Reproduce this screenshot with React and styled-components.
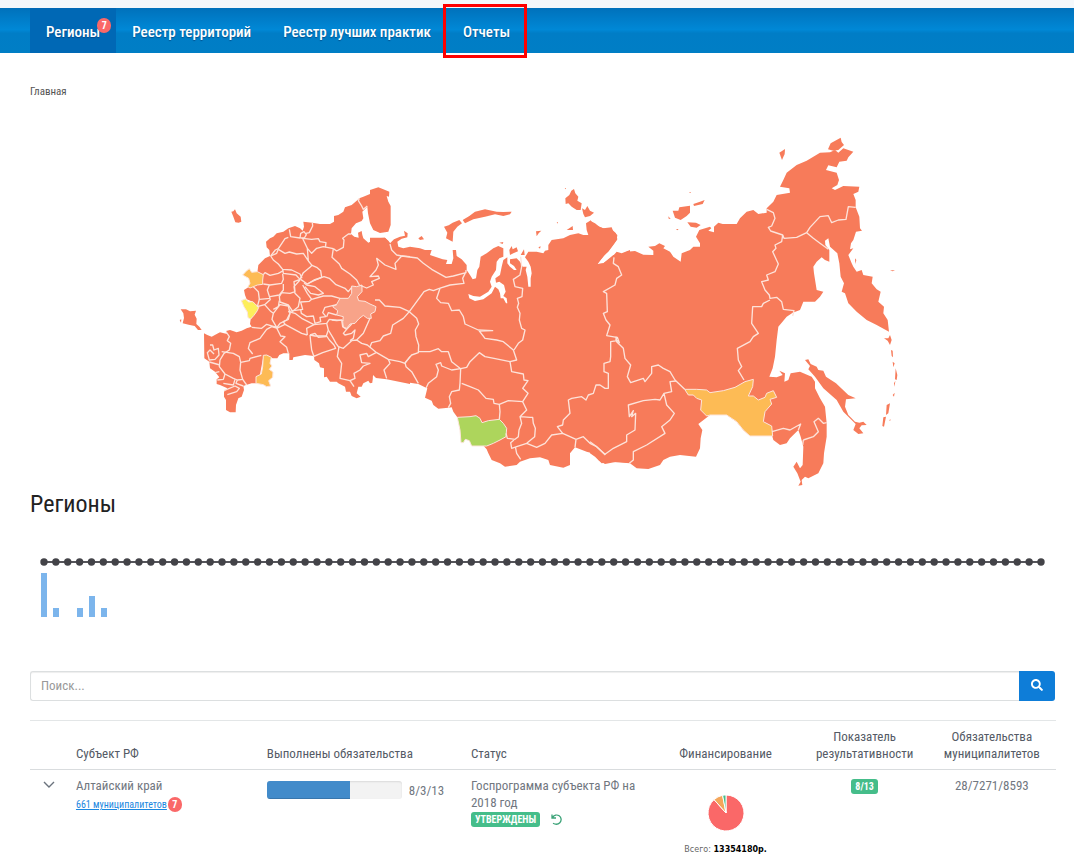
import styled, { createGlobalStyle } from "styled-components";
import { FaSearch } from "react-icons/fa";

const GlobalStyle = createGlobalStyle`
  * {
    box-sizing: border-box;
  }

  body {
    margin: 0;
    background: #fff;
    color: #71777f;
    font-family: "Roboto Condensed", "Liberation Sans Narrow", Roboto, sans-serif;
    font-size: 13px;
    line-height: 17px;
  }
`;

const Header = styled.header`
  padding-top: 8px;
  background: #f4f8fb;
`;

const Nav = styled.nav`
  display: flex;
  height: 45px;
  padding-left: 30px;
  background: linear-gradient(#0071bb 0%, #0088d6 48%, #007dc6 56%, #007ec5 100%);
`;

const NavLink = styled.a`
  position: relative;
  display: flex;
  align-items: center;
  padding: 4px 16px 0;
  color: #fff;
  font-size: 15px;
  font-weight: 500;
  text-decoration: none;
  text-shadow: 0 1px 1px rgba(0, 40, 90, 0.5);
  background: ${(p) => (p.$active ? "#0068b5" : "transparent")};

  &::after {
    content: "";
    display: ${(p) => (p.$marked ? "block" : "none")};
    position: absolute;
    inset: -4px -1px -5px -4px;
    border: 3px solid #f00;
  }
`;

const Badge = styled.span`
  display: inline-flex;
  align-items: center;
  justify-content: center;
  width: 14px;
  height: 15px;
  border-radius: 8px;
  background: #fa6868;
  color: #fff;
  font-size: 10px;
  font-weight: 700;
  line-height: 15px;
  text-shadow: none;
`;

const NavBadge = styled(Badge)`
  position: absolute;
  top: 10px;
  right: 5px;
`;

const Page = styled.main`
  padding: 30px 18px 0 30px;
`;

const Crumb = styled.a`
  display: block;
  color: #555;
  font-size: 11px;
  text-decoration: none;
`;

const MapSvg = styled.svg`
  display: block;
  width: 100%;
  margin-top: 30px;
`;

const Title = styled.h1`
  margin: 0;
  color: #222;
  font-size: 24px;
  font-weight: 400;
  line-height: 28px;
`;

const ChartSvg = styled.svg`
  display: block;
  width: 100%;
  margin-top: 32px;
`;

const Search = styled.form`
  display: flex;
  height: 30px;
  margin: 51px 1px 19px 0;
`;

const SearchInput = styled.input`
  flex: 1;
  min-width: 0;
  padding: 0 10px 2px;
  border: 1px solid #dcdfe0;
  border-right: 0;
  border-radius: 3px 0 0 3px;
  box-shadow: inset 0 1px 1px rgba(0, 0, 0, 0.07);
  font: inherit;

  &::placeholder {
    color: #999;
  }
`;

const SearchButton = styled.button`
  width: 36px;
  padding: 0;
  border: 0;
  border-radius: 0 3px 3px 0;
  background: #0e7dd8;
  color: #fff;
  font-size: 12px;
`;

const Table = styled.table`
  width: 100%;
  table-layout: fixed;
  border-collapse: collapse;
  border-top: 1px solid #e3e6e7;
`;

const Col = styled.col`
  width: ${(p) => p.$w}%;
`;

const Th = styled.th`
  padding: 7px 8px;
  border-bottom: 1px solid #d9dcde;
  color: #555b66;
  font-weight: 400;
  text-align: ${(p) => (p.$center ? "center" : "left")};
  vertical-align: bottom;
`;

const Td = styled.td`
  padding: 7px 8px;
  text-align: ${(p) => (p.$center ? "center" : "left")};
  vertical-align: top;
`;

const Toggle = styled.button`
  display: block;
  margin: 4px auto 0;
  padding: 0;
  border: 0;
  background: none;
  color: #6b737d;

  svg {
    display: block;
  }
`;

const SubRow = styled.div`
  display: flex;
  align-items: center;
  margin-top: 2px;
`;

const SubLink = styled.a`
  margin-right: 1px;
  color: #1b87e0;
  font-size: 10px;
  text-decoration: underline;
`;

const Progress = styled.div`
  display: flex;
  align-items: center;
  gap: 7px;
  margin-top: 4px;
`;

const Track = styled.div`
  width: 135px;
  height: 18px;
  overflow: hidden;
  border-radius: 3px;
  background: #f3f3f3;
  box-shadow: inset 0 1px 2px rgba(0, 0, 0, 0.1);
`;

const Fill = styled.div`
  height: 100%;
  background: #428bca;
  box-shadow: inset 0 -1px 0 rgba(0, 0, 0, 0.15);
`;

const Tag = styled.span`
  display: inline-block;
  padding: 0 4px;
  border-radius: 3px;
  background: #45bd8a;
  color: #fff;
  font-size: 10px;
  font-weight: 700;
  line-height: 15px;
`;

const StatusRow = styled.div`
  display: flex;
  align-items: center;
  gap: 11px;
  margin-top: 1px;
`;

const IconButton = styled.button`
  display: flex;
  padding: 0;
  border: 0;
  background: none;
  color: #3aa277;
`;

const Pie = styled.svg`
  display: block;
  margin: 18px auto 10px;
`;

const Total = styled.div`
  color: #666;
  font-family: "DejaVu Sans", sans-serif;
  font-size: 8px;

  b {
    color: #000;
  }
`;

const land = "#f77b5a";

// each part of the map has its own origin, units are thirds of a pixel
const west = {
  shapes: [
    "M568 85L580 80 600 72 600 60 625 52 640 58 658 65 657 80 650 78 655 95 662 108 662 165 655 185 630 189 610 180 600 160 594 130 592 110 585 117 577 125 580 145 575 153 558 160 545 175 543 192 553 200 566 203 564 188 575 183 577 195 580 205 595 218 620 205 645 203 655 212 662 222 720 250 720 642 650 628 618 624 604 610 608 625 607 638 600 640 595 632 580 640 575 650 565 650 560 670 572 680 560 685 545 678 540 665 528 665 525 650 505 640 500 635 480 635 470 620 462 622 462 595 450 592 447 580 433 570 432 558 405 555 370 562 368 570 358 570 358 550 340 550 328 555 322 565 308 565 290 555 280 560 265 640 245 640 228 645 220 648 222 660 215 680 205 685 198 705 197 727 180 727 168 720 168 690 162 680 162 665 172 655 150 645 140 642 140 628 148 622 135 605 120 595 118 575 103 565 102 490 112 495 125 500 140 492 150 487 162 490 172 492 168 483 180 480 200 487 215 482 230 475 245 470 240 462 242 448 265 412 248 395 230 388 225 375 222 360 235 352 250 350 280 315 262 308 265 285 285 265 300 258 298 240 290 232 288 215 300 205 310 200 320 190 340 185 355 175 375 168 390 175 398 182 402 170 400 155 427 158 450 162 480 162 492 155 492 138 505 135 520 125 525 112 545 105 560 92Z",
    "M184 125L190 124 195 118 200 130 212 140 214 155 206 158 196 157 190 140Z",
    "M32 418L48 418 60 424 78 422 74 434 80 446 79 462 88 470 95 480 84 480 74 468 56 464 38 460 42 444 40 430Z",
    "M29 450L34 448 33 458Z",
  ],
  tinted: [
    ["#fdbb55", "M218 315L230 302 238 296 245 307 262 305 280 314 278 330 278 343 262 345 250 350 240 354 234 350 240 340 236 325Z"],
    ["#fdee5c", "M214 392L226 387 236 396 248 395 256 402 266 412 262 422 252 436 242 447 234 443 232 426 222 410Z"],
    ["#fdbb55", "M280 556L290 555 304 562 300 580 306 588 298 598 309 606 308 622 296 632 302 648 290 650 280 644 258 640 258 620 274 612 278 590Z"],
    ["#f8a389", "M545 348L560 350 576 345 576 365 562 380 566 392 585 394 600 402 618 410 615 425 602 432 604 445 592 445 580 436 566 447 555 460 540 462 530 475 520 472 518 455 520 440 500 435 503 422 488 410 500 403 510 385 535 385 545 370Z"],
  ],
  borders: [
    "M568 85L565 92 575 108 580 118 592 108",
    "M427 158L428 168 418 188 408 190",
    "M358 178L362 200 390 204 392 190 402 185 409 194 403 204 392 204",
    "M355 202L345 206 325 236 316 240 302 258",
    "M325 238L345 250 358 246 380 252 400 250 415 273 412 235 400 210 398 205 425 208 445 206 450 215 468 218 466 232",
    "M302 258L310 270 325 282 338 298 365 300 390 312 396 325",
    "M302 258L320 250 325 238M415 273L426 286 420 292 400 308 390 328",
    "M412 235L425 250 440 235 460 230 490 236",
    "M490 236L500 243 520 232 522 210 518 205 535 192 543 192",
    "M426 286L440 292 452 302 455 322 432 332 412 342 392 328",
    "M338 298L340 310 378 315 390 328 372 335 375 365 360 370 335 368 328 380 330 396 355 405 368 424 385 410 390 385 375 370 372 350 390 330",
    "M280 314L285 308 300 316 325 310 340 302",
    "M280 342L300 345 335 340 340 328 338 312",
    "M250 350L265 365 268 388 300 385 292 360 298 345",
    "M340 342L340 360 328 375 300 380",
    "M268 388L262 410 284 404 302 388M284 404L302 424 310 430 306 448 320 472 290 463 275 475 245 472",
    "M310 418L325 410 328 392M310 430L330 404 355 408 360 430 350 450 330 460 320 474",
    "M412 342L432 330 462 320 478 325 498 344 525 355 535 365 545 352",
    "M402 338L410 345 435 350 460 370 445 375 422 370 405 350M398 345L412 370 425 388 460 378 485 378 510 385",
    "M425 388L418 394 392 396 398 418 370 422 355 425",
    "M392 418L394 430 410 440 430 438 435 460 452 455 450 442 468 440 458 428 465 412 500 404",
    "M355 425L375 430 395 445 432 464 470 460 478 448 520 452M470 440L475 428 500 435",
    "M470 460L475 480 468 500 445 502 435 490 420 495M412 495L395 490 345 463 320 475M412 495L410 475 432 464",
    "M490 236L486 262 508 282 515 295 540 312 560 330 568 345 590 354 610 345 605 335 628 325 625 318 600 320 618 300 625 285 620 265 645 285 678 298 675 280 695 258 720 260",
    "M660 222L665 240 680 255 695 258",
    "M345 463L340 455 355 448 360 430",
    "M320 474L332 498 345 500 330 515 350 532 355 550",
    "M320 474L305 470 290 478 270 505 240 518 235 535 248 552",
    "M274 556L240 565 238 572 212 577 208 560 190 550 155 545",
    "M168 485L178 500 172 512 182 520 178 540 162 550 150 570 148 590 165 612 190 625 202 630 218 628 210 600 212 577",
    "M120 525L128 525 132 540 145 535 147 555 135 568 118 570 112 548 120 540 132 552",
    "M118 576L150 585M148 605L135 608M165 612L160 628 142 630M195 628L190 645 160 640",
    "M202 630L198 640 220 648M162 662L195 648 208 655 200 665 172 674",
    "M218 628L230 645",
    "M420 495L422 515 425 540 432 560M420 495L435 498 470 498 478 510 492 525 497 535 458 548 430 560",
    "M475 480L490 505 498 520 505 530 520 535 545 512 560 510 575 520 592 525 620 548 655 568 690 575 705 580 720 560",
    "M485 450L500 452 515 450 518 470 530 478 520 490 525 495 545 490 555 480 550 505 540 512M530 478L545 462",
    "M560 510L580 490 600 445",
    "M507 530L502 560 515 580 510 625 540 632 555 625 552 610 570 600 580 588 600 580 575 578 570 555 590 550 595 560 618 548",
    "M655 568L660 580 642 600 650 625",
    "M540 632L552 650",
  ],
};

const centre = {
  shapes: [
    "M0 203L20 203 45 203 60 220 72 208 90 200 105 197 102 182 113 190 112 202 95 206 82 215 85 230 100 235 120 230 150 235 165 240 185 240 180 255 200 262 218 268 232 270 228 282 245 282 250 265 248 240 258 240 260 258 275 268 290 285 290 300 300 315 308 328 318 325 322 300 328 290 332 260 350 250 370 235 385 228 400 235 400 260 388 265 380 275 378 300 365 320 360 335 365 350 355 365 330 380 310 378 295 372 298 385 315 393 340 388 365 370 375 350 385 358 390 370 392 385 400 385 408 400 412 400 410 385 400 378 407 365 402 345 388 335 378 338 376 325 390 315 395 290 400 270 412 262 412 280 420 290 432 300 440 300 432 288 420 280 420 268 440 265 450 275 458 290 470 290 467 300 472 320 475 350 482 350 482 325 485 310 482 290 475 275 465 262 475 245 500 245 520 250 525 242 535 240 535 225 545 210 580 205 600 195 625 190 640 195 655 195 650 180 648 160 660 152 675 160 690 172 710 178 725 178 738 190 742 208 730 225 715 245 700 258 682 283 700 280 725 262 740 245 755 250 780 240 780 878 740 875 705 882 685 870 675 852 650 845 615 832 600 850 600 885 580 893 540 885 535 870 510 862 480 865 450 875 440 885 405 890 390 880 365 870 355 850 350 838 262 742 250 725 245 712 235 713 205 716 190 705 185 692 165 683 172 655 165 652 145 642 100 635 45 622 20 620 10 612 5 640 0 620Z",
    "M222 170L236 166 248 158 268 150 276 160 262 170 250 185 248 215 238 210 228 205 232 188Z",
    "M278 150L298 138 315 125 345 118 380 125 400 126 425 125 420 133 400 138 375 133 345 140 310 148 285 160Z",
    "M145 205L155 198 162 208 150 210Z",
    "M584 55L588 54 588 58Z",
    "M586 85L598 75 604 62 612 57 616 70 625 80 622 92 635 100 632 120 620 120 605 110 595 100 587 102Z",
    "M636 115L645 120 652 108 660 122 672 128 660 138 645 142 640 132Z",
    "M498 184L514 182 506 190 500 199ZM590 180L608 168 609 180ZM388 218L400 216 398 222Z",
    "M418 240L425 228 428 238 440 232 444 244 430 250 420 255ZM452 255L462 238 464 255Z",
    "M560 156L564 157 563 161ZM505 232L512 229 510 236Z",
  ],
  tinted: [
    ["#add55c", "M262 742L300 740 318 737 330 745 336 758 355 752 388 748 400 760 410 775 408 800 390 810 370 820 350 828 305 828 298 812 286 808 280 818 273 818 270 780Z"],
  ],
  borders: [
    "M95 258L142 264 160 280 185 298 228 322 250 318 288 308 288 300M288 305L278 325 282 340 240 345 208 355 190 362 178 358 162 365 140 395 118 425",
    "M15 390L28 390 45 408 90 412 118 425 100 445 68 465 62 490 40 498 30 512 5 518 0 530",
    "M118 425L140 445 146 462 136 480 138 500 146 525 145 548 125 555 105 578M105 578L108 590 125 605 145 640",
    "M145 545L180 545 205 536 215 545 235 545 245 575 272 596 245 600 215 588 212 578 198 583 205 600 200 620 175 640 168 655M272 596L270 640 268 660 245 665 238 680 242 700 235 713",
    "M210 355L200 385 212 398 235 400 245 422 268 420 280 440 285 462 325 480 368 482 328 483 345 505 380 510 400 515 430 540 440 570 420 575 372 565 345 560 328 548 300 575 290 592 272 596",
    "M452 260L455 290 450 315 430 328 435 350 458 355 456 380 442 385 446 400 442 412 450 430 448 450 455 475 465 480 458 510 445 520 432 540",
    "M420 575L425 605 460 612 462 630 474 632 458 655 474 670 458 695 415 692 388 703 372 700 370 688 348 685 325 660 300 650 275 640",
    "M388 703L390 725 388 748M458 695L470 720 450 740 455 760 447 780 445 800 435 808 412 805 408 790M452 740L480 742 488 742 490 760 496 775 494 800 470 820 440 830 425 835 422 818 432 810M470 820L500 832 525 820 545 795 578 790 600 800 618 808 640 800 660 820 680 830 706 855M436 830L440 850 452 868M618 808L615 832",
    "M578 790L562 770 578 765 580 750 600 730 595 690 605 685 635 680 648 690 655 675 670 670 678 645 690 645 705 655 715 655 715 610 702 605 702 580 720 575 722 560 722 515 742 512 748 518 742 502 738 510 740 502 710 497 720 465 708 450 700 430 712 425 710 370 700 365 735 345 740 325 755 315 745 290 730 280 732 262",
  ],
};

const east = {
  shapes: [
    "M0 300L15 315 40 325 65 322 70 335 82 345 80 360 65 380 22 432 40 430 70 405 90 405 110 395 135 393 160 404 190 405 190 392 175 380 195 378 208 370 225 378 220 385 240 395 250 410 272 425 275 400 300 390 310 380 330 380 330 370 318 350 328 330 360 320 364 325 355 332 372 337 372 320 385 308 398 312 440 312 450 295 470 275 490 270 505 282 530 278 530 265 550 245 560 225 600 218 598 205 570 200 580 180 590 158 620 135 650 122 690 98 720 97 735 90 745 98 760 85 790 95 775 112 770 122 748 125 740 142 715 136 708 150 740 158 747 180 742 195 725 205 735 210 760 198 808 200 805 215 790 222 797 240 797 262 808 290 810 325 816 332 798 335 790 360 783 370 780 388 790 385 775 405 785 430 790 440 800 455 815 450 820 465 848 470 845 490 860 508 872 515 865 545 882 560 880 580 893 600 897 635 860 615 830 600 800 575 775 550 765 520 755 515 762 490 752 470 748 430 742 400 720 380 715 355 705 362 706 375 718 390 718 425 705 420 695 412 680 425 670 440 672 460 680 510 700 515 690 530 675 545 640 545 630 570 608 578 590 590 565 620 560 660 555 710 548 745 538 770 560 772 578 765 568 752 585 760 583 785 595 780 602 760 630 755 665 770 675 785 675 805 690 835 705 860 710 910 710 950 702 1000 700 1030 685 1060 655 1075 645 1070 635 1080 637 1095 625 1097 632 1085 622 1060 610 1040 620 1025 630 1045 638 1035 640 980 632 950 625 930 600 955 590 970 570 975 550 960 546 946 480 948 460 930 440 905 410 885 360 885 325 912 337 930 332 955 330 985 318 1010 270 1005 240 1010 220 1020 210 1035 175 1047 140 1045 120 1030 60 1025 35 1030 15 1010 0 1000Z",
    "M714 88L722 70 752 53 755 66 762 75 745 90 730 92Z",
    "M568 98L585 87 584 102 576 120Z",
    "M248 272L265 272 268 262 300 257 300 278 290 288 272 300 255 293Z",
    "M310 252L330 245 344 240 338 252 312 258ZM292 307L318 308 332 315 320 323 302 320ZM298 216L303 216 300 220ZM235 289L242 297 236 296ZM258 327L266 327 262 331Z",
    "M645 720L655 718 662 732 680 740 685 750 700 752 708 770 738 790 775 825 797 835 768 838 765 860 775 885 795 905 808 908 820 905 830 915 815 916 808 925 820 940 805 942 790 930 797 912 760 875 740 840 700 805 675 770 655 748 660 738Z",
    "M882 655L895 655 900 645 905 660 900 675 893 662ZM903 690L908 692 909 712 905 708ZM908 725L914 730 910 742ZM917 745L922 765 920 780 915 778ZM912 790L916 782 914 800ZM908 825L914 818 912 830ZM890 855L900 850 895 880 888 885ZM880 892L888 890 882 920 877 918ZM898 900L902 898 900 904ZM795 415L799 420 796 432ZM900 451L915 451 908 454Z",
  ],
  tinted: [
    ["#fdbb55", "M284 808L320 808 350 810 360 818 400 812 435 802 465 785 490 778 488 800 475 828 490 828 505 840 525 832 530 820 550 812 560 832 540 838 545 852 525 875 520 905 545 918 548 948 480 948 460 930 440 905 410 885 360 885 350 888 332 870 335 840 320 835 310 825 295 825Z"],
  ],
  borders: [
    "M530 268L550 278 555 295 545 318 535 322 542 333 578 345 582 355 620 352 650 338 660 322 690 290 715 287 725 308 745 300 768 298 775 260 797 262M650 338L670 355 690 370 715 388",
    "M578 345L575 365 555 375 558 385 548 395 555 410 565 432 555 455 530 465 535 480 515 485 525 510 538 525 540 535 560 532 575 545 580 568 612 572 608 588M540 540L520 550 515 560 488 560 485 610 505 640 490 650 480 665 442 685 445 720 455 740 445 752 462 780",
    "M78 650L80 665 100 685 105 715 122 735 112 770 122 788 160 775 165 785 185 760 185 740 205 735 220 745 240 755 255 780 284 808",
    "M546 935L580 925 600 930 632 912 625 930",
    "M258 783L240 785 245 815 222 820 210 840 195 838 160 842 115 855 118 890 130 872 125 890 137 880 135 930 110 945 110 965 70 985 45 1003 20 980 0 965M222 820L230 855 253 880 240 900 215 920 225 940 170 975 130 995 130 1020 118 1030",
    "M640 960L670 950 685 935 672 905 685 895 700 910 710 908M640 960L638 975",
  ],
};

const parts = [
  { x: 510, y: 510, ...west },
  { x: 1110, y: 510, ...centre },
  { x: 1770, y: 360, ...east },
];

const RussiaMap = () => (
  <MapSvg viewBox="90 390 3078 1080" role="img" aria-label="Карта регионов">
    {parts.map((part) => (
      <g key={part.x} transform={`translate(${part.x} ${part.y})`} strokeLinejoin="round">
        {part.shapes.map((d) => (
          <path key={d} d={d} fill={land} />
        ))}
      </g>
    ))}
    {parts.map((part) => (
      <g key={part.x} transform={`translate(${part.x} ${part.y})`} strokeLinejoin="round">
        {part.tinted.map(([fill, d]) => (
          <path key={d} d={d} fill={fill} stroke="#fde5dc" strokeWidth="3" />
        ))}
        {part.borders.map((d) => (
          <path key={d} d={d} fill="none" stroke="#fde3da" strokeWidth="4" />
        ))}
      </g>
    ))}
  </MapSvg>
);

const bars = [
  [0, 44],
  [1, 9],
  [3, 9],
  [4, 21],
  [5, 9],
];
const step = 997 / 84;

const Chart = () => (
  <ChartSvg viewBox="0 0 1026 70" role="img" aria-label="Распределение регионов">
    <path d="M14 12H1011" stroke="#55555a" strokeWidth="2" />
    {Array.from({ length: 85 }, (_, i) => (
      <circle key={i} cx={14 + i * step} cy="12" r="3.7" fill="#434348" />
    ))}
    {bars.map(([i, h]) => (
      <rect key={i} x={Math.ceil(14 + i * step) - 3} y={67 - h} width="6" height={h} fill="#7cb5ec" />
    ))}
  </ChartSvg>
);

const App = () => {
  return (
    <>
      <GlobalStyle />
      <Header>
        <Nav>
          <NavLink href="#regions" $active>
            Регионы
            <NavBadge>7</NavBadge>
          </NavLink>
          <NavLink href="#territories">Реестр территорий</NavLink>
          <NavLink href="#practices">Реестр лучших практик</NavLink>
          <NavLink href="#reports" $marked>
            Отчеты
          </NavLink>
        </Nav>
      </Header>
      <Page>
        <Crumb href="#main">Главная</Crumb>
        <RussiaMap />
        <Title>Регионы</Title>
        <Chart />
        <Search>
          <SearchInput type="text" placeholder="Поиск..." aria-label="Поиск" />
          <SearchButton type="button" aria-label="Найти">
            <FaSearch />
          </SearchButton>
        </Search>
        <Table>
          <colgroup>
            <Col $w={3.7} />
            <Col $w={18.6} />
            <Col $w={19.9} />
            <Col $w={18.2} />
            <Col $w={14.8} />
            <Col $w={12.3} />
            <Col $w={12.5} />
          </colgroup>
          <thead>
            <tr>
              <Th />
              <Th>Субъект РФ</Th>
              <Th>Выполнены обязательства</Th>
              <Th>Статус</Th>
              <Th $center>Финансирование</Th>
              <Th $center>Показатель результативности</Th>
              <Th $center>Обязательства муниципалитетов</Th>
            </tr>
          </thead>
          <tbody>
            <tr>
              <Td>
                <Toggle type="button" aria-label="Развернуть">
                  <svg width="12" height="8" viewBox="0 0 12 8" fill="none" stroke="currentColor" strokeWidth="1.4">
                    <path d="M1 1l5 5 5-5" />
                  </svg>
                </Toggle>
              </Td>
              <Td>
                Алтайский край
                <SubRow>
                  <SubLink href="#municipalities">661 муниципалитетов</SubLink>
                  <Badge>7</Badge>
                </SubRow>
              </Td>
              <Td>
                <Progress>
                  <Track>
                    <Fill style={{ width: `${(8 / 13) * 100}%` }} />
                  </Track>
                  8/3/13
                </Progress>
              </Td>
              <Td>
                Госпрограмма субъекта РФ на 2018 год
                <StatusRow>
                  <Tag>УТВЕРЖДЕНЫ</Tag>
                  <IconButton type="button" aria-label="Вернуть">
                    <svg width="11" height="11" viewBox="0 0 11 11" fill="none" stroke="currentColor" strokeWidth="1.3">
                      <path d="M1 0.5V4h4M1.2 3.8C3 1 6 0.4 8.2 1.8c2.4 1.6 2.5 5 0.6 6.9C7.2 10.3 4.5 10.6 2 9.2" />
                    </svg>
                  </IconButton>
                </StatusRow>
              </Td>
              <Td $center>
                <Pie width="36" height="36" viewBox="-18 -18 36 36" stroke="#fff" strokeWidth="1">
                  <path d="M0 0V-18A18 18 0 1 1 -12 -13.4Z" fill="#fa6868" />
                  <path d="M0 0L-12 -13.4A18 18 0 0 1 -3.4 -17.7Z" fill="#f4a65a" />
                  <path d="M0 0L-3.4 -17.7A18 18 0 0 1 0 -18Z" fill="#45bd8a" />
                </Pie>
                <Total>
                  Всего: <b>13354180р.</b>
                </Total>
              </Td>
              <Td $center>
                <Tag>8/13</Tag>
              </Td>
              <Td $center>28/7271/8593</Td>
            </tr>
          </tbody>
        </Table>
      </Page>
    </>
  );
};

export default App;
